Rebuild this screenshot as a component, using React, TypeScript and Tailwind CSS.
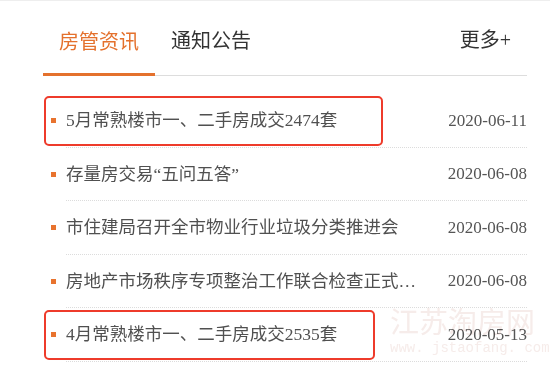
import React from "react";

interface NewsItem {
    title: string;
    date: string;
    marked?: string;
}

const news: NewsItem[] = [
    { title: "5月常熟楼市一、二手房成交2474套", date: "2020-06-11", marked: "w-[339px]" },
    { title: "存量房交易“五问五答”", date: "2020-06-08" },
    { title: "市住建局召开全市物业行业垃圾分类推进会", date: "2020-06-08" },
    { title: "房地产市场秩序专项整治工作联合检查正式启动", date: "2020-06-08" },
    { title: "4月常熟楼市一、二手房成交2535套", date: "2020-05-13", marked: "w-[331px]" },
];

const App: React.FC = () => {
    return (
        <div className="relative w-[550px] h-[374px] bg-white border-t border-[#eeeeee] overflow-hidden">
            {/* watermark */}
            <div className="absolute left-[390px] top-[305px] pointer-events-none text-[#f6ecea] leading-none">
                <div className="text-[29px]" style={{ fontFamily: '"Noto Sans CJK SC", sans-serif' }}>江苏淘房网</div>
                <div className="mt-[6px] text-[14px]" style={{ fontFamily: '"Liberation Mono", monospace' }}>www. jstaofang. com</div>
            </div>

            <div className="relative ml-[43px] mr-[23px]">
                {/* Tabs */}
                <div className="flex items-end border-b border-[#dddddd] h-[75px]">
                    <div className="px-[16px] pt-[26px] pb-[18px] leading-[28px] text-[20px] text-[#e4712d] border-b-[3px] border-[#e4712d] -mb-px"
                        style={{ fontFamily: '"Noto Sans CJK SC", sans-serif' }}>
                        房管资讯
                    </div>
                    <div className="px-[16px] pt-[26px] pb-[21px] leading-[28px] text-[20px] text-[#333333]"
                        style={{ fontFamily: '"Noto Sans CJK SC", sans-serif' }}>
                        通知公告
                    </div>
                    <div className="ml-auto pr-[16px] pb-[21px] leading-[28px] text-[20px] text-[#333333]"
                        style={{ fontFamily: '"Liberation Serif", "Noto Sans CJK SC", serif' }}>
                        更多+
                    </div>
                </div>

                {/* List */}
                <ul className="mt-[18px]" style={{ fontFamily: '"Liberation Serif", "Noto Sans CJK SC", serif' }}>
                    {news.map((item) => (
                        <li key={item.title} className="relative flex items-center">
                            {item.marked && (
                                <div className={`absolute left-px top-[2px] bottom-[2px] ${item.marked} border-2 border-[#ee3b2b] rounded-[5px]`} />
                            )}
                            <span className="ml-[8px] mr-[10px] w-[5px] h-[5px] bg-[#e8732e] shrink-0" />
                            <div className="flex-1 flex items-center justify-between h-[53.5px] border-b border-dotted border-[#dcdcdc]">
                                <span className="truncate w-[356px] text-[17.5px] text-[#505050]">{item.title}</span>
                                <span className="text-[17px] text-[#555555] mix-blend-multiply">{item.date}</span>
                            </div>
                        </li>
                    ))}
                </ul>
            </div>
        </div>
    );
};

export default App;
